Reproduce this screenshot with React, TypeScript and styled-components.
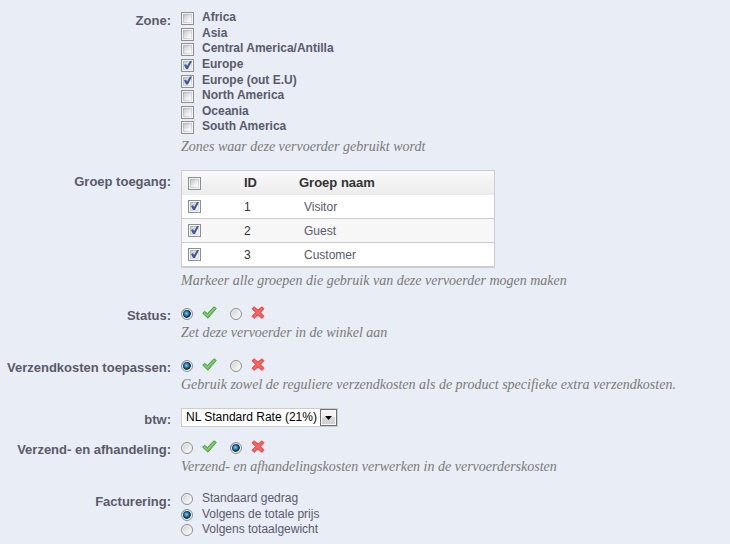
import React from "react";
import styled, { createGlobalStyle } from "styled-components";

const GlobalStyle = createGlobalStyle`
  * { box-sizing: border-box; }
  body {
    margin: 0;
    background: #e9edf5;
    color: #5a5a6b;
    font: 12px/16px "Liberation Sans", Arial, sans-serif;
  }
`;

const Form = styled.form`
  padding: 9px 8px 7px 0;
`;

const Field = styled.div<{ $gap?: number }>`
  display: grid;
  grid-template-columns: 171px minmax(0, 1fr);
  column-gap: 10px;
  margin-bottom: ${(p) => p.$gap ?? 15}px;
`;

const FieldLabel = styled.label`
  padding-top: 4px;
  font-size: 13px;
  font-weight: bold;
  text-align: right;
  white-space: nowrap;
`;

const Hint = styled.p`
  margin: 0;
  color: #7a7a7a;
  font: italic 14px/16px "Liberation Serif", Georgia, serif;
`;

const ZoneList = styled.div`
  display: grid;
  grid-template-rows: repeat(8, minmax(0, 1fr));
  height: 125px;
  margin-bottom: 5px;
`;

const BillingList = styled.div`
  display: grid;
  grid-template-rows: repeat(3, minmax(0, 1fr));
  height: 47px;
`;

const Option = styled.label<{ $bold?: boolean }>`
  display: flex;
  align-items: flex-start;
  gap: ${(p) => (p.$bold ? 8 : 9)}px;
  line-height: 16px;
  font-weight: ${(p) => (p.$bold ? "bold" : "normal")};

  input { margin-top: 3px; }
`;

const Checkbox = styled.input.attrs({ type: "checkbox" })`
  appearance: none;
  display: block;
  flex: none;
  width: 13px;
  height: 13px;
  margin: 0;
  border: 1px solid #8e8f8f;
  background: linear-gradient(135deg, #c6c9d1, #f6f6f6 75%) center / 7px 7px no-repeat,
    linear-gradient(135deg, #aeb3b9, #e6e7e9) center / 9px 9px no-repeat, #f4f4f4;

  &:checked::after {
    content: "";
    display: block;
    width: 11px;
    height: 11px;
    background: #4157a0;
    clip-path: polygon(2px 5px, 4px 4px, 5px 6px, 8px 1px, 10px 1px, 6px 9px, 4px 9px);
  }
`;

const Radio = styled.input.attrs({ type: "radio" })`
  appearance: none;
  display: block;
  flex: none;
  width: 12px;
  height: 12px;
  margin: 0;
  border: 1px solid #8e8f8f;
  border-radius: 50%;
  background: linear-gradient(135deg, #c9ccd2, #f5f5f5 75%);
  box-shadow: inset 0 0 0 1px #f4f4f4;

  &:checked {
    background: radial-gradient(circle at 45% 45%, #7ed2f2 0, #2f8cc2 22%, #0d3352 46%, #102b45 52%, #dfe2e6 60%);
  }
`;

const Switch = styled.div`
  display: flex;
  align-items: center;
  gap: 13px;
  height: 20px;
  margin-bottom: 1px;
`;

const SwitchOption = styled.label`
  display: flex;
  align-items: center;
  gap: 9px;
  height: 20px;

  svg { display: block; margin-bottom: 3px; }
`;

const GroupTable = styled.table`
  width: 314px;
  max-width: 100%;
  margin-bottom: 5px;
  border: 1px solid #cccccc;
  border-bottom-width: 2px;
  border-collapse: separate;
  border-spacing: 0;
  table-layout: fixed;
  background: #ffffff;
  color: #333333;
  text-align: left;
`;

const HeadRow = styled.tr`
  height: 24px;
  background: linear-gradient(#f9f9f9, #ececec);
  font-size: 13px;
`;

const BodyRow = styled.tr`
  height: 24px;

  &:nth-child(even) { background: #f7f7f7; }
  &:last-child { height: 23px; }
  &:not(:last-child) td { border-bottom: 1px solid #cccccc; }
`;

const HeadCell = styled.th<{ $width?: number }>`
  width: ${(p) => (p.$width ? `${p.$width}px` : "auto")};
  padding: 0 0 0 6px;
`;

const Cell = styled.td<{ $name?: boolean }>`
  padding: 0 0 0 ${(p) => (p.$name ? 11 : 6)}px;
  color: ${(p) => (p.$name ? "#5a5a6b" : "#333333")};
`;

const SelectBox = styled.div`
  position: relative;
  width: 157px;
  height: 19px;
`;

const Select = styled.select`
  appearance: none;
  display: block;
  width: 100%;
  height: 19px;
  padding: 0 17px 0 4px;
  border: 1px solid #cccccc;
  border-radius: 0;
  background: #ffffff;
  color: #000000;
  font: 12px/17px "Liberation Sans", Arial, sans-serif;
`;

const SelectArrow = styled.span`
  position: absolute;
  top: 1px;
  right: 1px;
  display: grid;
  place-items: center;
  width: 17px;
  height: 17px;
  border: 1px solid #707070;
  background: linear-gradient(#f2f2f2 50%, #d8d8d8 50%, #cfcfcf);
  box-shadow: inset 0 0 0 1px #f8f8f8;
  pointer-events: none;
`;

const CheckIcon = () => (
  <svg width="15" height="13" viewBox="0 0 15 13" role="img" aria-label="Ja">
    <path d="M.7 7.2 2.6 5.3 5.4 7.6 11.9.8 14.3 2.3 6 12.2Z" fill="#6cbd5b" stroke="#4f9f49" strokeWidth="1" strokeLinejoin="round" />
    <path d="M2.2 7.1 5.5 9.6 12.6 2.1" fill="none" stroke="#94d983" strokeWidth="1" />
  </svg>
);

const CrossIcon = () => (
  <svg width="14" height="13" viewBox="0 0 14 13" role="img" aria-label="Nee">
    <path d="M3.1.8 7 4 10.9.8 13 2.7 9.4 6.4 13 10.3 10.9 12.4 7 8.9 3.1 12.4 1 10.3 4.6 6.4 1 2.7Z" fill="#fb5450" stroke="#f04a4a" strokeWidth="1" strokeLinejoin="round" />
    <path d="M3.1 2.6 11 10.4M10.9 2.6 3.1 10.4" fill="none" stroke="#ff7a76" strokeWidth="1" />
  </svg>
);

const zones = [
  { name: "Africa", on: false },
  { name: "Asia", on: false },
  { name: "Central America/Antilla", on: false },
  { name: "Europe", on: true },
  { name: "Europe (out E.U)", on: true },
  { name: "North America", on: false },
  { name: "Oceania", on: false },
  { name: "South America", on: false },
];

const groups = ["Visitor", "Guest", "Customer"];
const billing = ["Standaard gedrag", "Volgens de totale prijs", "Volgens totaalgewicht"];

type YesNoProps = { id: string; label: string; hint: string; value: boolean };

const YesNoField = ({ id, label, hint, value }: YesNoProps) => (
  <Field>
    <FieldLabel htmlFor={`${id}-on`}>{label}</FieldLabel>
    <div>
      <Switch>
        <SwitchOption>
          <Radio id={`${id}-on`} name={id} defaultChecked={value} />
          <CheckIcon />
        </SwitchOption>
        <SwitchOption>
          <Radio name={id} defaultChecked={!value} />
          <CrossIcon />
        </SwitchOption>
      </Switch>
      <Hint>{hint}</Hint>
    </div>
  </Field>
);

export default function App() {
  return (
    <>
      <GlobalStyle />
      <Form>
        <Field>
          <FieldLabel as="span" id="zone-label">Zone:</FieldLabel>
          <div>
            <ZoneList role="group" aria-labelledby="zone-label">
              {zones.map((z) => (
                <Option key={z.name} $bold>
                  <Checkbox defaultChecked={z.on} />
                  {z.name}
                </Option>
              ))}
            </ZoneList>
            <Hint>Zones waar deze vervoerder gebruikt wordt</Hint>
          </div>
        </Field>
        <Field>
          <FieldLabel as="span" id="group-label">Groep toegang:</FieldLabel>
          <div>
            <GroupTable aria-labelledby="group-label">
              <thead>
                <HeadRow>
                  <HeadCell $width={56}><Checkbox aria-label="Alle groepen" /></HeadCell>
                  <HeadCell $width={55}>ID</HeadCell>
                  <HeadCell>Groep naam</HeadCell>
                </HeadRow>
              </thead>
              <tbody>
                {groups.map((name, i) => (
                  <BodyRow key={name}>
                    <Cell><Checkbox id={`group-${i}`} defaultChecked /></Cell>
                    <Cell>{i + 1}</Cell>
                    <Cell $name><label htmlFor={`group-${i}`}>{name}</label></Cell>
                  </BodyRow>
                ))}
              </tbody>
            </GroupTable>
            <Hint>Markeer alle groepen die gebruik van deze vervoerder mogen maken</Hint>
          </div>
        </Field>
        <YesNoField id="status" label="Status:" hint="Zet deze vervoerder in de winkel aan" value />
        <YesNoField
          id="costs"
          label="Verzendkosten toepassen:"
          hint="Gebruik zowel de reguliere verzendkosten als de product specifieke extra verzendkosten."
          value
        />
        <Field $gap={10}>
          <FieldLabel htmlFor="tax">btw:</FieldLabel>
          <SelectBox>
            <Select id="tax">
              <option>NL Standard Rate (21%)</option>
            </Select>
            <SelectArrow>
              <svg width="7" height="4" viewBox="0 0 7 4" aria-hidden="true">
                <path d="M0 0H7L3.5 4Z" fill="#000" />
              </svg>
            </SelectArrow>
          </SelectBox>
        </Field>
        <YesNoField
          id="handling"
          label="Verzend- en afhandeling:"
          hint="Verzend- en afhandelingskosten verwerken in de vervoerderskosten"
          value={false}
        />
        <Field $gap={0}>
          <FieldLabel as="span" id="billing-label">Facturering:</FieldLabel>
          <BillingList role="radiogroup" aria-labelledby="billing-label">
            {billing.map((name, i) => (
              <Option key={name}>
                <Radio name="billing" defaultChecked={i === 1} />
                {name}
              </Option>
            ))}
          </BillingList>
        </Field>
      </Form>
    </>
  );
}
